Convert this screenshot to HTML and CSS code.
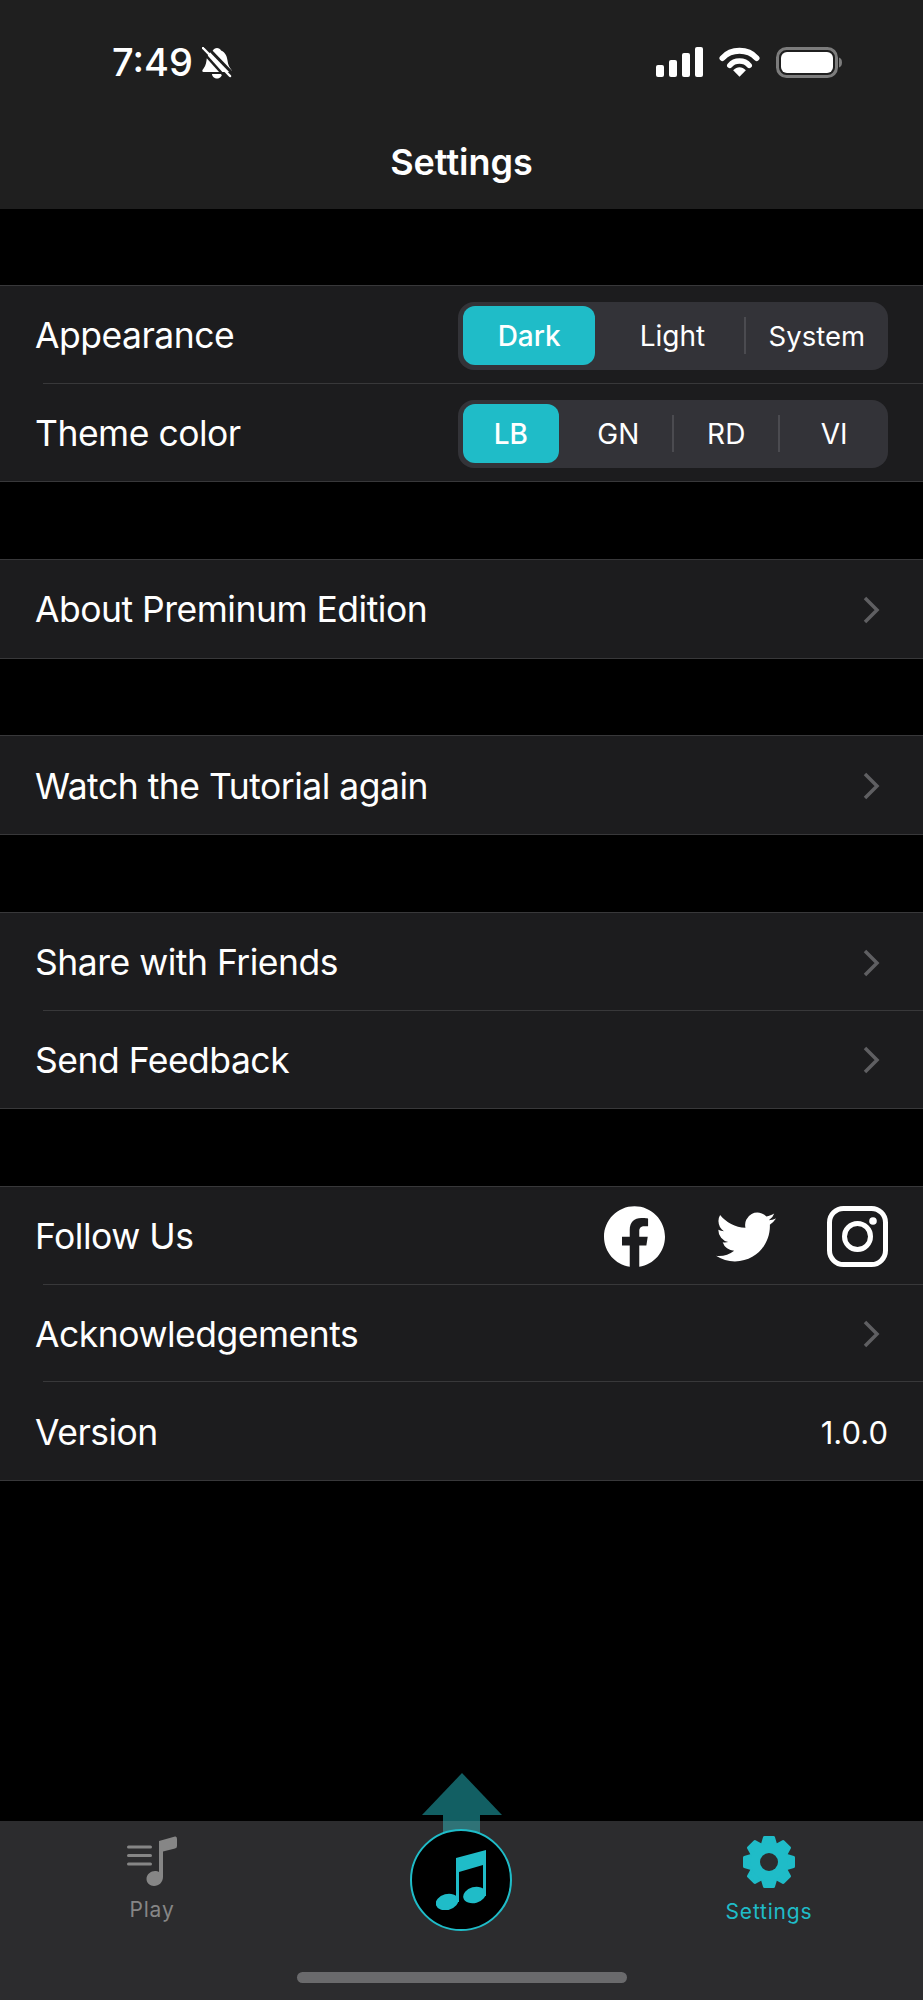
FILE: index.html
```html
<!DOCTYPE html>
<html>
	<head>
		<title>Settings</title>
		<link rel="stylesheet" href="styles.css">
	</head>
	<body>
		<div class="header">
			<div class="status-bar">
				<div class="status-left">
					<span class="time">7:49</span>
					<svg class="bell" viewBox="0 0 30 32" width="30" height="32">
						<path d="M11 3.500C12 0 18 0 19 3.500c4.500 2 6 6 6.500 10 .5 4.500 2 7 4 9.500.5 1-.2 2-1 2H1.500c-1 0-1.500-1-1-2 2-2.500 3.500-5 4-9.500.5-4 2-8 6.500-10z" fill="#fff"/>
						<path d="M10 27h10c0 2.500-2.500 4.500-5 4.500S10 29.500 10 27z" fill="#fff"/>
						<path d="M4 -1L33 29" stroke="#1f1f1f" stroke-width="3"/>
						<path d="M1 1l27 28" stroke="#fff" stroke-width="2.500" stroke-linecap="round"/>
						<path d="M-2 2L25 32" stroke="#1f1f1f" stroke-width="2.500"/>
					</svg>
				</div>
				<div class="status-right">
					<svg viewBox="0 0 47 30" width="47" height="30">
						<rect x="0" y="18" width="8" height="12" rx="2" fill="#fff"/>
						<rect x="13" y="13" width="8" height="17" rx="2" fill="#fff"/>
						<rect x="26" y="6" width="8" height="24" rx="2" fill="#fff"/>
						<rect x="39" y="0" width="8" height="30" rx="2" fill="#fff"/>
					</svg>
					<svg viewBox="0 0 42 30" width="41" height="30">
						<path d="M3.500 11C12.500 1 29.500 1 38.500 11" fill="none" stroke="#fff" stroke-width="6" stroke-linecap="round"/>
						<path d="M11 18.500c5-6 15-6 20 0" fill="none" stroke="#fff" stroke-width="5.500" stroke-linecap="round"/>
						<path d="M14.500 23.500c4-4 9-4 13 0L21 30z" fill="#fff"/>
					</svg>
					<svg viewBox="0 0 66 31" width="66" height="31">
						<rect x="1.500" y="1.500" width="59" height="28" rx="9" fill="none" stroke="#7c7c7c" stroke-width="3"/>
						<rect x="5" y="5" width="52" height="21" rx="6" fill="#fff"/>
						<path d="M63 10.500c2 .5 3 2.500 3 5s-1 4.500-3 5z" fill="#7c7c7c"/>
					</svg>
				</div>
			</div>
			<div class="nav-title">Settings</div>
		</div>

		<div class="content">
			<div class="group">
				<div class="row">
					<div class="label">Appearance</div>
					<div class="segments">
						<div class="seg seg-dark selected">Dark</div>
						<div class="seg seg-light">Light</div>
						<span class="seg-line"></span>
						<div class="seg seg-system">System</div>
					</div>
				</div>
				<div class="row">
					<div class="label">Theme color</div>
					<div class="segments">
						<div class="seg seg-lb selected">LB</div>
						<div class="seg seg-gn">GN</div>
						<span class="seg-line"></span>
						<div class="seg seg-rd">RD</div>
						<span class="seg-line"></span>
						<div class="seg seg-vi">VI</div>
					</div>
				</div>
			</div>

			<div class="group">
				<div class="row">
					<div class="label">About Preminum Edition</div>
					<svg class="chevron" viewBox="0 0 18 28" width="18" height="28"><path d="M3 2l12 12L3 26"/></svg>
				</div>
			</div>

			<div class="group">
				<div class="row">
					<div class="label">Watch the Tutorial again</div>
					<svg class="chevron" viewBox="0 0 18 28" width="18" height="28"><path d="M3 2l12 12L3 26"/></svg>
				</div>
			</div>

			<div class="group">
				<div class="row">
					<div class="label">Share with Friends</div>
					<svg class="chevron" viewBox="0 0 18 28" width="18" height="28"><path d="M3 2l12 12L3 26"/></svg>
				</div>
				<div class="row">
					<div class="label">Send Feedback</div>
					<svg class="chevron" viewBox="0 0 18 28" width="18" height="28"><path d="M3 2l12 12L3 26"/></svg>
				</div>
			</div>

			<div class="group">
				<div class="row">
					<div class="label">Follow Us</div>
					<div class="socials">
						<svg class="fb" viewBox="0 0 24 24" width="61" height="61"><path fill="#fff" d="M24 12.073c0-6.627-5.373-12-12-12s-12 5.373-12 12c0 5.990 4.388 10.954 10.125 11.854v-8.385H7.078v-3.470h3.047V9.430c0-3.007 1.792-4.669 4.533-4.669 1.312 0 2.686.235 2.686.235v2.953H15.830c-1.491 0-1.956.925-1.956 1.874v2.250h3.328l-.532 3.470h-2.796v8.385C19.612 23.027 24 18.062 24 12.073z"/></svg>
						<svg class="tw" viewBox="0 0 24 20" width="60" height="50"><path fill="#fff" d="M23.953 2.570a10 10 0 01-2.825.775 4.958 4.958 0 002.163-2.723c-.951.555-2.005.959-3.127 1.184a4.920 4.920 0 00-8.384 4.482C7.690 6.095 4.067 4.130 1.640 1.162a4.822 4.822 0 00-.666 2.475c0 1.710.870 3.213 2.188 4.096a4.904 4.904 0 01-2.228-.616v.060a4.923 4.923 0 003.946 4.827 4.996 4.996 0 01-2.212.085 4.936 4.936 0 004.604 3.417 9.867 9.867 0 01-6.102 2.105c-.390 0-.779-.023-1.170-.067a13.995 13.995 0 007.557 2.209c9.053 0 13.998-7.496 13.998-13.985 0-.210 0-.420-.015-.630A9.935 9.935 0 0024 2.590z"/></svg>
						<svg class="ig" viewBox="0 0 61 61" width="61" height="61">
							<rect x="2.500" y="2.500" width="56" height="56" rx="14" fill="none" stroke="#fff" stroke-width="5"/>
							<circle cx="30.500" cy="30.500" r="13" fill="none" stroke="#fff" stroke-width="5"/>
							<circle cx="46" cy="15" r="3.800" fill="#fff"/>
						</svg>
					</div>
				</div>
				<div class="row">
					<div class="label">Acknowledgements</div>
					<svg class="chevron" viewBox="0 0 18 28" width="18" height="28"><path d="M3 2l12 12L3 26"/></svg>
				</div>
				<div class="row">
					<div class="label">Version</div>
					<div class="value">1.0.0</div>
				</div>
			</div>
		</div>

		<div class="tab-bar">
			<div class="up-arrow">
				<div class="arrow-head"></div>
				<div class="arrow-stem"></div>
			</div>
			<div class="tab">
				<svg viewBox="0 0 50 50" width="50" height="50">
					<path d="M1.500 11h22M1.500 19.500h22M1.500 28h22" stroke="#868686" stroke-width="3" stroke-linecap="round"/>
					<path fill="#868686" d="M32 5L48 .5Q50 0 50 3v7q0 2-2 2.500L36 15.500V41c0 5-4 9-9 9-4 0-7.500-3-7.500-7 0-5 4.500-8 8.500-8 1.500 0 3 .3 4 1z"/>
				</svg>
				<div class="tab-name">Play</div>
			</div>
			<div class="music-btn">
				<svg viewBox="0 0 50 60" width="50" height="60">
					<path fill="#1fbcc8" d="M20 8L50 0v46h-3V15L23 22v30h-3z"/>
					<ellipse cx="11" cy="52" rx="11.500" ry="8" transform="rotate(-15 11 52)" fill="#1fbcc8"/>
					<ellipse cx="38.500" cy="45" rx="11.500" ry="8" transform="rotate(-15 38.500 45)" fill="#1fbcc8"/>
				</svg>
			</div>
			<div class="tab tab-active">
				<svg viewBox="0 0 52 52" width="52" height="52">
					<g fill="#1fbcc8" stroke="#1fbcc8" stroke-width="3" stroke-linejoin="round">
						<path d="M19 10L21.500 1.500h9L33 10z"/>
						<path d="M19 10L21.500 1.500h9L33 10z" transform="rotate(45 26 26)"/>
						<path d="M19 10L21.500 1.500h9L33 10z" transform="rotate(90 26 26)"/>
						<path d="M19 10L21.500 1.500h9L33 10z" transform="rotate(135 26 26)"/>
						<path d="M19 10L21.500 1.500h9L33 10z" transform="rotate(180 26 26)"/>
						<path d="M19 10L21.500 1.500h9L33 10z" transform="rotate(225 26 26)"/>
						<path d="M19 10L21.500 1.500h9L33 10z" transform="rotate(270 26 26)"/>
						<path d="M19 10L21.500 1.500h9L33 10z" transform="rotate(315 26 26)"/>
					</g>
					<circle cx="26" cy="26" r="18.500" fill="#1fbcc8"/>
					<circle cx="26" cy="26" r="9" fill="#2c2c2e"/>
				</svg>
				<div class="tab-name">Settings</div>
			</div>
			<div class="home-indicator"></div>
		</div>
	</body>
</html>
```

FILE: styles.css
```css
* {
    box-sizing: border-box;
}
body {
    margin: 0;
    height: 2000px;
    background: black;
    color: white;
    font-family: Inter, "Liberation Sans", sans-serif;
    display: flex;
    flex-direction: column;
}
.header {
    height: 209px;
    background: #1f1f1f;
}
.status-bar {
    display: flex;
    justify-content: space-between;
    padding: 47px 81px 0 112px;
    height: 140px;
}
.status-left {
    display: flex;
    align-items: flex-start;
    gap: 9px;
}
.time {
    font-size: 38px;
    line-height: 30px;
    font-weight: 500;
}
.status-right {
    display: flex;
    align-items: flex-start;
    gap: 16px;
}
.nav-title {
    text-align: center;
    font-size: 36px;
    line-height: 44px;
    font-weight: 600;
}
.content {
    padding-top: 76px;
    display: flex;
    flex-direction: column;
    gap: 76.7px;
}
.group {
    background: #1c1c1e;
    border-top: 1px solid #38383a;
    border-bottom: 1px solid #38383a;
}
.row {
    height: 97.7px;
    padding: 2px 35px 0;
    display: flex;
    align-items: center;
    justify-content: space-between;
    position: relative;
}
.row + .row::before {
    content: '';
    position: absolute;
    top: -1px;
    left: 43px;
    right: 0;
    height: 1px;
    background: #38383a;
}
.label {
    font-size: 35.5px;
    letter-spacing: -0.5px;
}
.value {
    font-size: 31px;
}
.chevron {
    fill: none;
    stroke: #5f5f62;
    stroke-width: 3.500;
    margin-right: 8px;
}
.segments {
    width: 430px;
    height: 68px;
    padding: 5px;
    border-radius: 16px;
    background: #333338;
    display: flex;
    align-items: center;
    font-size: 28px;
}
.seg {
    height: 59px;
    border-radius: 12px;
    display: flex;
    align-items: center;
    justify-content: center;
}
.selected {
    background: #1fbcc8;
    font-weight: 500;
}
.seg-line {
    width: 2px;
    height: 37px;
    background: #4b4b50;
}
.seg-dark { width: 133px; }
.seg-light { width: 149px; padding-left: 6px; }
.seg-system { width: 138px; padding-left: 5px; font-size: 27.5px; }
.seg-lb { width: 96px; }
.seg-gn { width: 114px; padding-left: 6px; }
.seg-rd { width: 105px; }
.seg-vi { width: 103px; padding-left: 5px; }
.socials {
    display: flex;
    align-items: center;
}
.fb {
    margin-right: 51px;
}
.tw {
    margin-right: 51px;
}
.tab-bar {
    margin-top: auto;
    height: 179px;
    background: #2c2c2e;
    position: relative;
    display: flex;
    justify-content: space-between;
    padding: 15px 111px 0 125px;
}
.tab {
    display: flex;
    flex-direction: column;
    align-items: center;
    width: 54px;
    gap: 9px;
}
.tab-active {
    width: 86px;
}
.tab-name {
    font-size: 21px;
    line-height: 30px;
    letter-spacing: 0.8px;
    color: #868686;
}
.tab-active .tab-name {
    color: #1fbcc8;
}
.up-arrow {
    position: absolute;
    left: 422px;
    top: -48px;
    width: 80px;
}
.arrow-head {
    width: 0;
    height: 0;
    border-left: 40px solid transparent;
    border-right: 40px solid transparent;
    border-bottom: 42px solid #125f63;
}
.arrow-stem {
    width: 37px;
    height: 26px;
    margin-left: 21px;
    background: linear-gradient(#125f63 6px, #2f7377 6px);
}
.music-btn {
    position: absolute;
    left: 410px;
    top: 8px;
    width: 102px;
    height: 102px;
    border-radius: 50%;
    border: 2px solid #1fbcc8;
    background: black;
    display: flex;
    align-items: center;
    justify-content: center;
}
.home-indicator {
    position: absolute;
    left: 297px;
    bottom: 17px;
    width: 330px;
    height: 11px;
    border-radius: 6px;
    background: #6a6a6c;
}
```
